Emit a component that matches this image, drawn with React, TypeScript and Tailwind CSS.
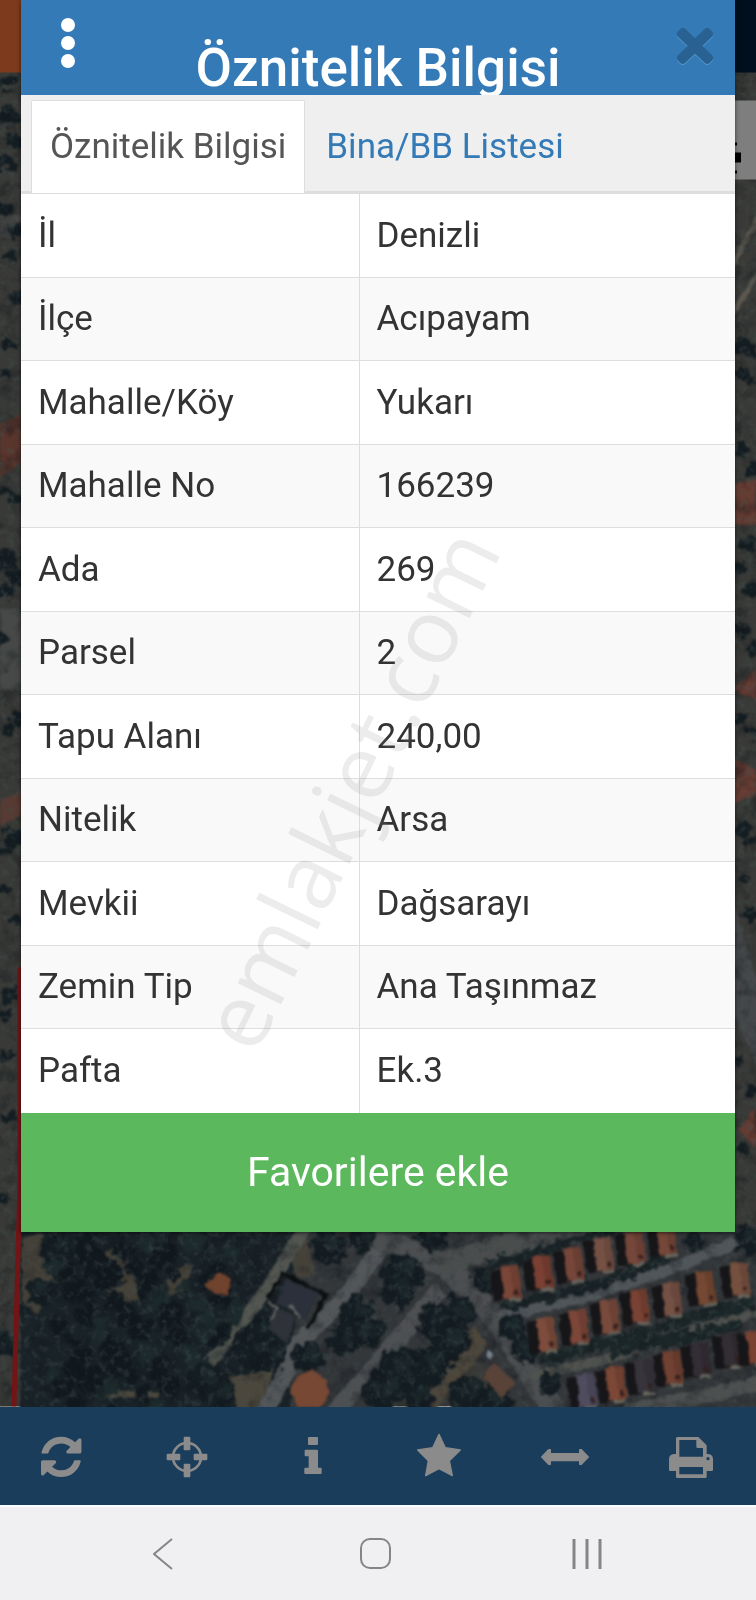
import type { ReactNode } from "react";

const rows = [
  { label: "İl", value: "Denizli" },
  { label: "İlçe", value: "Acıpayam" },
  { label: "Mahalle/Köy", value: "Yukarı" },
  { label: "Mahalle No", value: "166239" },
  { label: "Ada", value: "269" },
  { label: "Parsel", value: "2" },
  { label: "Tapu Alanı", value: "240,00" },
  { label: "Nitelik", value: "Arsa" },
  { label: "Mevkii", value: "Dağsarayı" },
  { label: "Zemin Tip", value: "Ana Taşınmaz" },
  { label: "Pafta", value: "Ek.3" },
];

// x, y, fill
const houses: [number, number, string][] = [
  [511, 1283, "#7a4637"],
  [543, 1273, "#7a4033"],
  [574, 1265, "#754639"],
  [604, 1255, "#755144"],
  [635, 1248, "#75463a"],
  [667, 1239, "#754738"],
  [547, 1335, "#7d4c3c"],
  [579, 1327, "#7c4639"],
  [610, 1317, "#784a3c"],
  [640, 1307, "#7a4234"],
  [672, 1300, "#755044"],
  [706, 1288, "#744832"],
  [740, 1280, "#75503f"],
  [587, 1391, "#504c60"],
  [616, 1384, "#7c4736"],
  [645, 1377, "#37353b"],
  [673, 1368, "#714132"],
  [701, 1360, "#332e35"],
  [732, 1350, "#332e33"],
  [757, 1348, "#7a4232"],
];

// x, y, radius
const trees: [number, number, number][] = [
  [401, 1274, 21], [400, 1292, 17], [432, 1236, 16],
  [440, 1322, 22], [458, 1314, 18], [450, 1342, 20],
  [402, 1372, 24], [430, 1366, 20], [385, 1390, 20], [418, 1398, 16],
  [466, 1394, 18], [494, 1400, 18], [484, 1281, 13],
  [513, 1328, 14], [524, 1352, 13], [550, 1384, 11],
  [694, 1242, 10], [748, 1240, 14], [378, 1330, 10],
  [328, 1248, 17], [362, 1238, 14], [357, 1315, 18], [345, 1338, 17],
  [364, 1334, 15], [308, 1358, 15], [255, 1350, 23], [272, 1358, 13],
  [262, 1330, 12], [205, 1382, 18], [222, 1396, 14], [372, 1392, 11],
  [57, 1248, 15], [40, 1292, 14], [6, 1345, 12],
];

const sideTrees: [number, number, number][] = [
  [8, 82, 10], [10, 118, 12], [14, 142, 10], [4, 163, 12],
  [4, 210, 9], [16, 232, 9], [10, 256, 7], [18, 300, 8], [10, 344, 6],
  [4, 374, 6], [16, 498, 9], [4, 492, 6], [6, 560, 14], [16, 578, 10],
  [4, 592, 10], [4, 640, 7], [16, 720, 8], [8, 730, 6], [14, 838, 12],
  [4, 852, 8], [4, 890, 8], [16, 920, 8], [12, 996, 10], [5, 1014, 8],
  [6, 1056, 7], [10, 1118, 8], [3, 1198, 7],
  [741, 345, 9], [752, 352, 7], [740, 374, 8], [752, 382, 6],
  [742, 450, 9], [753, 470, 9], [748, 545, 10], [739, 570, 8],
  [752, 590, 10], [742, 630, 9], [752, 650, 8], [741, 720, 6],
  [752, 732, 8], [742, 830, 9], [752, 842, 8], [744, 880, 7],
  [752, 915, 9], [740, 1060, 7], [752, 1090, 9], [741, 1150, 8],
];

const grove = Array.from({ length: 75 }, (_, i) => ({
  x: 50 + ((i * 61) % 187),
  y: 1238 + ((i * 37) % 174),
  r: 6 + ((i * 7) % 8),
})).filter(({ x, y }) => x < 310 - (y - 1232) * 0.8);

const SatelliteMap = () => (
  <svg
    className="absolute inset-0 h-full w-full"
    viewBox="0 0 756 1407"
    preserveAspectRatio="xMidYMax slice"
    aria-hidden="true"
  >
    <defs>
      <filter id="rough" x="0" y="0" width="100%" height="100%" colorInterpolationFilters="sRGB">
        <feTurbulence type="fractalNoise" baseFrequency="0.1" numOctaves="3" seed="4" result="n" />
        <feDisplacementMap in="SourceGraphic" in2="n" scale="18" xChannelSelector="R" yChannelSelector="G" />
        <feGaussianBlur stdDeviation="0.9" />
      </filter>
      <filter id="edge" x="0" y="0" width="100%" height="100%" colorInterpolationFilters="sRGB">
        <feTurbulence type="fractalNoise" baseFrequency="0.12" numOctaves="2" seed="9" result="n" />
        <feDisplacementMap in="SourceGraphic" in2="n" scale="5" xChannelSelector="R" yChannelSelector="G" />
        <feGaussianBlur stdDeviation="0.8" />
      </filter>
      <filter id="grain" x="0" y="0" width="100%" height="100%" colorInterpolationFilters="sRGB">
        <feTurbulence type="fractalNoise" baseFrequency="0.06" numOctaves="4" seed="2" />
        <feColorMatrix values="0 0 0 0 0.06  0 0 0 0 0.08  0 0 0 0 0.1  3 0 0 0 -1.4" />
      </filter>
      <filter id="light" x="0" y="0" width="100%" height="100%" colorInterpolationFilters="sRGB">
        <feTurbulence type="fractalNoise" baseFrequency="0.13" numOctaves="3" seed="12" />
        <feColorMatrix values="0 0 0 0 0.26  0 0 0 0 0.31  0 0 0 0 0.31  0 3 0 0 -1.5" />
      </filter>
    </defs>
    <rect width="756" height="1407" fill="#393a37" />

    {/* ground and roads */}
    <g filter="url(#edge)">
      <path d="M0 215h24v22H0zM0 610h24v80H0z" fill="#474847" />
      <path d="M0 425l24-12v48L0 478z" fill="#59352c" />
      <path d="M0 800l24-8v24L0 826z" fill="#573a32" />
      <path d="M732 485l24-6v46h-24zM732 690l24-20v30zM732 758l24 12v26l-24 8zM738 1130l18-22v40z" fill="#653c32" />
      <path d="M730 270l30-55M732 315l28-44" stroke="#5d5950" strokeWidth="5" />
      <path d="M732 900l28 90v80l-28-60z" fill="#45474a" />
      <path d="M20 1225h370v190H20z" fill="#192227" />
      <path d="M300 1225h470v190H510L470 1340 380 1415h-90z" fill="#34373a" />
      <path d="M22 1238l20-4 12 48-16 32-16-10zM104 1252l22-4 6 24 8 26-16 8-20-16zM168 1272l26-8-10 26-20 8zM290 1245l16-10 10 40-22 4z" fill="#454139" />
      <path d="M228 1378l45-8-10 45h-24zM104 1392h56v6h-56z" fill="#4b473c" />
      <path d="M306 1226L272 1282 236 1332 208 1364" fill="none" stroke="#535650" strokeWidth="13" />
      <path d="M382 1248L340 1304 300 1342 288 1368 264 1415" fill="none" stroke="#54575a" strokeWidth="17" />
      <path d="M332 1415L378 1364 440 1290" fill="none" stroke="#4e5053" strokeWidth="18" />
      <path d="M360 1232L446 1266 498 1322 558 1418" fill="none" stroke="#4c4e50" strokeWidth="23" />
      <path d="M436 1266L505 1246 610 1224" fill="none" stroke="#4b4d4d" strokeWidth="22" />
      <path d="M498 1317L595 1295 680 1266 756 1234" fill="none" stroke="#51565a" strokeWidth="12" />
      <path d="M532 1377L612 1358 680 1334 760 1312" fill="none" stroke="#50524e" strokeWidth="10" />
      <path d="M625 1412L690 1400 760 1384" fill="none" stroke="#4e5050" strokeWidth="15" />
      <path d="M443 1370L474 1326 488 1345 456 1386 432 1415h-14z" fill="#4d463b" />
    </g>

    {/* trees */}
    <g filter="url(#rough)" fill="#141d22">
      {sideTrees.map(([x, y, r]) => (
        <ellipse key={`${x}-${y}`} cx={x} cy={y} rx={r} ry={r * 0.75} />
      ))}
      {grove.map(({ x, y, r }, i) => (
        <circle key={i} cx={x} cy={y} r={r} fill={i % 3 ? "#11191f" : "#1d2a2c"} />
      ))}
      {trees.map(([x, y, r]) => (
        <g key={`${x}-${y}`}>
          <circle cx={x} cy={y} r={r} />
          <circle cx={x + r / 4} cy={y - r / 4} r={r / 2} fill="#1c282b" />
        </g>
      ))}
      <path d="M486 1268L620 1228M505 1306L585 1288 670 1258" fill="none" stroke="#1a2427" strokeWidth="11" />
      <path d="M540 1362L650 1330 756 1302M610 1352L740 1326" fill="none" stroke="#1b2628" strokeWidth="12" />
    </g>

    <rect y="73" width="756" height="1334" filter="url(#grain)" opacity="0.35" />
    <rect y="73" width="756" height="1334" filter="url(#light)" opacity="0.4" />

    {/* buildings */}
    <g filter="url(#edge)">
      {houses.map(([x, y, fill]) => (
        <g key={`${x}-${y}`} transform={`translate(${x} ${y}) rotate(-7)`}>
          <path d="M-19-15h14v32h-14z" fill="#161518" />
          <path d="M-9-17H9v33H-9z" fill={fill} />
          <path d="M0-17H9v33H2z" fill="#000" opacity="0.1" />
          <path d="M2 8h4v4H2z" fill="#331e1b" />
          <path d="M-4 16h12v3h-12z" fill="#6b6960" />
        </g>
      ))}
      <path d="M268 1299l15-25 43 22-19 34" fill="none" stroke="#0b0e10" strokeWidth="4" />
      <path d="M287 1279l32 14-13 27-30-17z" fill="#2b303a" />
      <path d="M273 1307l23 9-9 28-18-14z" fill="#30323a" />
      <path d="M268 1303l10 5-7 13M290 1306l10 12" fill="none" stroke="#6d6f68" strokeWidth="2" />
      <path d="M298 1376l14-6 14 10 4 14-10 14h-22l-8-16z" fill="#774834" />
      <path d="M210 1280l10-8 12 8-4 16-14-3-10-6z" fill="#70432f" />
      <path d="M488 1348l-22 31 10 18-12-15z" fill="#15191d" />
      <path d="M494 1362l22 22-16 14-16-20z" fill="#594338" />
      <path d="M488 1350l6 5-4 5-5-3z" fill="#76808a" />
    </g>
    <path d="M20 968V1180L14 1407" fill="none" stroke="#711516" strokeWidth="5" />
    <path d="M0 0h378v73H0z" fill="#7e3a1c" />
    <path d="M378 0h378v73H378z" fill="#000f1d" />
    <path d="M700 101h56v79h-56z" fill="#7e7e7e" />
    <path d="M735 143h2v3h-2zM735 153h6v10h-6zM735 171h2v3h-2z" />
  </svg>
);

const tools: { name: string; icon: ReactNode }[] = [
  {
    name: "Yenile",
    icon: (
      <g transform="translate(6 14) scale(0.079)">
        <path d="M1511 928q0 5-1 7-64 268-268 434.5T764 1536q-146 0-282.5-55T238 1324l-129 129q-19 19-45 19t-45-19-19-45V960q0-26 19-45t45-19h448q26 0 45 19t19 45-19 45l-137 137q71 66 161 102t187 36q134 0 250-65t186-179q11-17 53-117 8-23 30-23h192q13 0 22.5 9.5t9.5 22.5zm25-800v448q0 26-19 45t-45 19h-448q-26 0-45-19t-19-45 19-45l138-138Q969 256 768 256q-134 0-250 65T332 500q-11 17-53 117-8 23-30 23H50q-13 0-22.5-9.5T18 608v-7q65-268 270-434.5T768 0q146 0 284 55.5T1297 212l130-129q19-19 45-19t45 19 19 45z" />
      </g>
    ),
  },
  {
    name: "Konum",
    icon: (
      <>
        <circle cx="66" cy="75" r="42" fill="none" stroke="currentColor" strokeWidth="8" />
        <rect x="56" y="14" width="20" height="41" rx="3" />
        <rect x="56" y="95" width="20" height="41" rx="3" />
        <rect x="5" y="65" width="41" height="20" rx="3" />
        <rect x="86" y="65" width="41" height="20" rx="3" />
      </>
    ),
  },
  {
    name: "Bilgi",
    icon: (
      <>
        <rect x="51" y="15" width="30" height="24" rx="3" />
        <path d="M44 53h34q3 0 3 3v51h8q3 0 3 3v13q0 3-3 3H43q-3 0-3-3v-13q0-3 3-3h10V73h-9q-3 0-3-3V56q0-3 3-3z" />
      </>
    ),
  },
  {
    name: "Favoriler",
    icon: (
      <path
        d="M66 7l19 40 45 7-33 32 9 45-40-21-40 21 8-45L2 54l45-7z"
        stroke="currentColor"
        strokeWidth="4"
        strokeLinejoin="round"
      />
    ),
  },
  {
    name: "Ölçüm",
    icon: (
      <path
        d="M-4 75l21-22h5v12h88V53h5l21 22-21 22h-5V86H22v11h-5z"
        stroke="currentColor"
        strokeWidth="4"
        strokeLinejoin="round"
      />
    ),
  },
  {
    name: "Yazdır",
    icon: (
      <path
        fillRule="evenodd"
        d="M26 15h62l25 25v26h4q15 1 15 16v32q0 3-3 3h-16v17q0 4-4 4H25q-4 0-4-4v-17H3q-3 0-3-3V82q0-15 15-16h6V19q0-4 5-4zM31 24v50h71V48H86q-4 0-4-4V24zM31 105v22h71v-22zM117 75a5 5 0 1 0 0 10 5 5 0 0 0 0-10z"
      />
    ),
  },
];

const CROSS =
  "M20 2l34 33L88 2q4-3 8 0l10 11q3 4 0 8L72 54l34 33q3 4 0 8L96 105q-4 3-8 0L54 73l-34 32q-4 3-8 0L2 95q-3-4 0-8l34-33L2 21q-3-4 0-8L12 2q4-3 8 0z";

const ParcelTable = () => (
  <table className="w-full table-fixed border-collapse text-left text-[35px] leading-[40px] text-[#333]">
    <colgroup>
      <col className="w-[338px]" />
      <col />
    </colgroup>
    <tbody>
      {rows.map(({ label, value }) => (
        <tr key={label} className="odd:h-[84px] even:h-[83px] odd:bg-white even:bg-[#f9f9f9]">
          <th scope="row" className="border-t border-r border-[#ddd] px-[17px] font-normal">
            {label}
          </th>
          <td className="border-t border-[#ddd] px-[17px]">{value}</td>
        </tr>
      ))}
    </tbody>
  </table>
);

export default function App() {
  return (
    <div className="flex min-h-screen flex-col font-[Roboto,sans-serif]">
      <main className="relative flex-1 overflow-hidden px-[21px] pb-[175px]">
        <SatelliteMap />

        <section className="relative bg-white shadow-[0_1px_4px_rgba(0,0,0,0.6)]">
          <header className="grid h-[95px] grid-cols-[1fr_auto_1fr] items-start overflow-hidden bg-[#337ab7] text-white">
            <button type="button" aria-label="Menü" className="ml-10 mt-[18px] flex w-[14px] flex-col gap-1">
              <span className="size-[14px] rounded-full bg-white" />
              <span className="size-[14px] rounded-full bg-white" />
              <span className="size-[14px] rounded-full bg-white" />
            </button>
            <h1 className="mt-[38px] text-[53px] leading-[60px] font-medium">Öznitelik Bilgisi</h1>
            <button type="button" aria-label="Kapat" className="mt-[28px] mr-[22px] justify-self-end">
              <svg viewBox="-2 -2 112 112" className="size-[36px] overflow-visible" strokeWidth="7">
                <path d={CROSS} fill="#4f94c8" stroke="#4f94c8" transform="translate(0 4)" />
                <path d={CROSS} fill="#296292" stroke="#296292" />
              </svg>
            </button>
          </header>

          <div role="tablist" className="flex h-[98px] items-end gap-1 bg-[#efefef] px-[10px] text-[35px] leading-[40px] shadow-[inset_0_-2px_0_#ddd]">
            <button
              type="button"
              role="tab"
              aria-selected="true"
              className="h-[93px] rounded-t-xs border border-b-0 border-[#ddd] bg-white px-[18px] text-[#555]"
            >
              Öznitelik Bilgisi
            </button>
            <button type="button" role="tab" aria-selected="false" className="h-[93px] px-[17px] text-[#337ab7]">
              Bina/BB Listesi
            </button>
          </div>

          <ParcelTable />

          <button type="button" className="h-[119px] w-full bg-[#5cb85c] text-[41px] leading-[48px] text-white">
            Favorilere ekle
          </button>
        </section>

        <div className="pointer-events-none absolute inset-x-0 top-0 flex h-[1576px] items-center justify-center pr-15">
          <span className="-rotate-64 font-['Open_Sans',sans-serif] text-[90px] leading-none text-[#808080]/15">
            emlakjet.com
          </span>
        </div>
      </main>

      <footer>
        <div className="grid h-[98px] grid-cols-6 bg-[#1a3d5c] text-[#8b8b8b]">
          {tools.map(({ name, icon }) => (
            <button key={name} type="button" aria-label={name} className="flex items-center justify-center">
              <svg viewBox="0 0 144 144" fill="currentColor" className="size-12 overflow-visible">
                {icon}
              </svg>
            </button>
          ))}
        </div>

        <nav className="flex h-[96px] items-center justify-center border-t-2 border-[#f8fbff] bg-[#f0f0f2] pr-[6px] text-[#858587]">
          <button type="button" aria-label="Geri" className="flex w-[212px] justify-center">
            <svg viewBox="0 0 20 32" className="h-8 w-5" fill="none" stroke="currentColor" strokeWidth="2">
              <path d="M19 1L1 16l18 15" />
            </svg>
          </button>
          <button type="button" aria-label="Ana ekran" className="flex w-[212px] justify-center">
            <span className="size-[31px] rounded-[10px] border-2 border-current" />
          </button>
          <button type="button" aria-label="Son uygulamalar" className="flex w-[212px] justify-center">
            <svg viewBox="0 0 30 30" className="size-[30px]" stroke="currentColor" strokeWidth="3">
              <path d="M2 0v30M15 0v30M28 0v30" />
            </svg>
          </button>
        </nav>
      </footer>
    </div>
  );
}
